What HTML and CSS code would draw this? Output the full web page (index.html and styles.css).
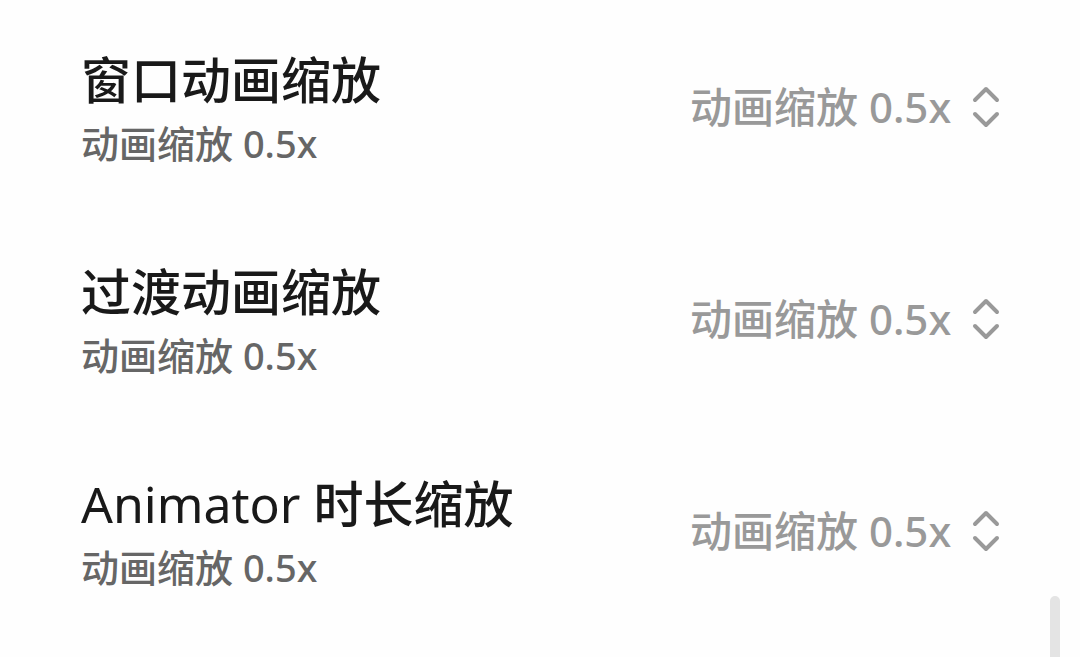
FILE: index.html
```html
<!DOCTYPE html>
<html lang="zh-CN">
<head>
<meta charset="utf-8">
<meta name="viewport" content="width=device-width, initial-scale=1">
<title>动画缩放</title>
<link rel="stylesheet" href="styles.css">
</head>
<body>
<main class="settings">
  <div class="row">
    <div class="labels">
      <label class="title" for="window-scale">窗口动画缩放</label>
      <p class="summary">动画缩放 0.5x</p>
    </div>
    <div class="picker">
      <select class="value" id="window-scale">
        <option selected>动画缩放 0.5x</option>
        <option>动画缩放 1x</option>
        <option>动画缩放 1.5x</option>
      </select>
      <svg class="arrows" viewBox="0 0 28 42" aria-hidden="true"><path d="M3 14 14 3 25 14M3 28 14 39 25 28"/></svg>
    </div>
  </div>
  <div class="row">
    <div class="labels">
      <label class="title" for="transition-scale">过渡动画缩放</label>
      <p class="summary">动画缩放 0.5x</p>
    </div>
    <div class="picker">
      <select class="value" id="transition-scale">
        <option selected>动画缩放 0.5x</option>
        <option>动画缩放 1x</option>
        <option>动画缩放 1.5x</option>
      </select>
      <svg class="arrows" viewBox="0 0 28 42" aria-hidden="true"><path d="M3 14 14 3 25 14M3 28 14 39 25 28"/></svg>
    </div>
  </div>
  <div class="row">
    <div class="labels">
      <label class="title" for="animator-scale"><span class="latin">Animator </span>时长缩放</label>
      <p class="summary">动画缩放 0.5x</p>
    </div>
    <div class="picker">
      <select class="value" id="animator-scale">
        <option selected>动画缩放 0.5x</option>
        <option>动画缩放 1x</option>
        <option>动画缩放 1.5x</option>
      </select>
      <svg class="arrows" viewBox="0 0 28 42" aria-hidden="true"><path d="M3 14 14 3 25 14M3 28 14 39 25 28"/></svg>
    </div>
  </div>
</main>
<div class="scroll-thumb"></div>
</body>
</html>
```
FILE: styles.css
```css
* {
  box-sizing: border-box;
}

body {
  margin: 0;
  min-height: 100vh;
  background: #fefefe;
  color: #191919;
  font-family: "Noto Sans", "Noto Sans CJK SC", sans-serif;
  font-weight: 500;
}

.settings {
  padding: 1px 80px 0 81px;
}

.row {
  display: flex;
  align-items: center;
  justify-content: space-between;
  gap: 24px;
  padding: 43px 0;
}

.labels {
  display: flex;
  flex-direction: column;
}

.title {
  font-size: 50px;
  line-height: 72px;
}

.latin {
  font-weight: 400;
}

.summary {
  margin: 0;
  color: #666;
  font-size: 38px;
  line-height: 54px;
}

.picker {
  display: grid;
  align-items: center;
}

.value,
.arrows {
  grid-row: 1;
  grid-column: 1;
}

.value {
  appearance: none;
  margin: 0;
  padding: 0 48px 0 0;
  border: 0;
  background: transparent;
  color: #999;
  font-family: inherit;
  font-size: 42px;
  font-weight: 500;
  line-height: 60px;
}

.arrows {
  justify-self: end;
  width: 28px;
  height: 42px;
  fill: none;
  stroke: #999;
  stroke-width: 4;
  stroke-linecap: round;
  stroke-linejoin: round;
  pointer-events: none;
}

.scroll-thumb {
  position: fixed;
  top: 596px;
  right: 20px;
  bottom: 0;
  width: 10px;
  border-radius: 5px 5px 0 0;
  background: #e4e4e4;
}
```
